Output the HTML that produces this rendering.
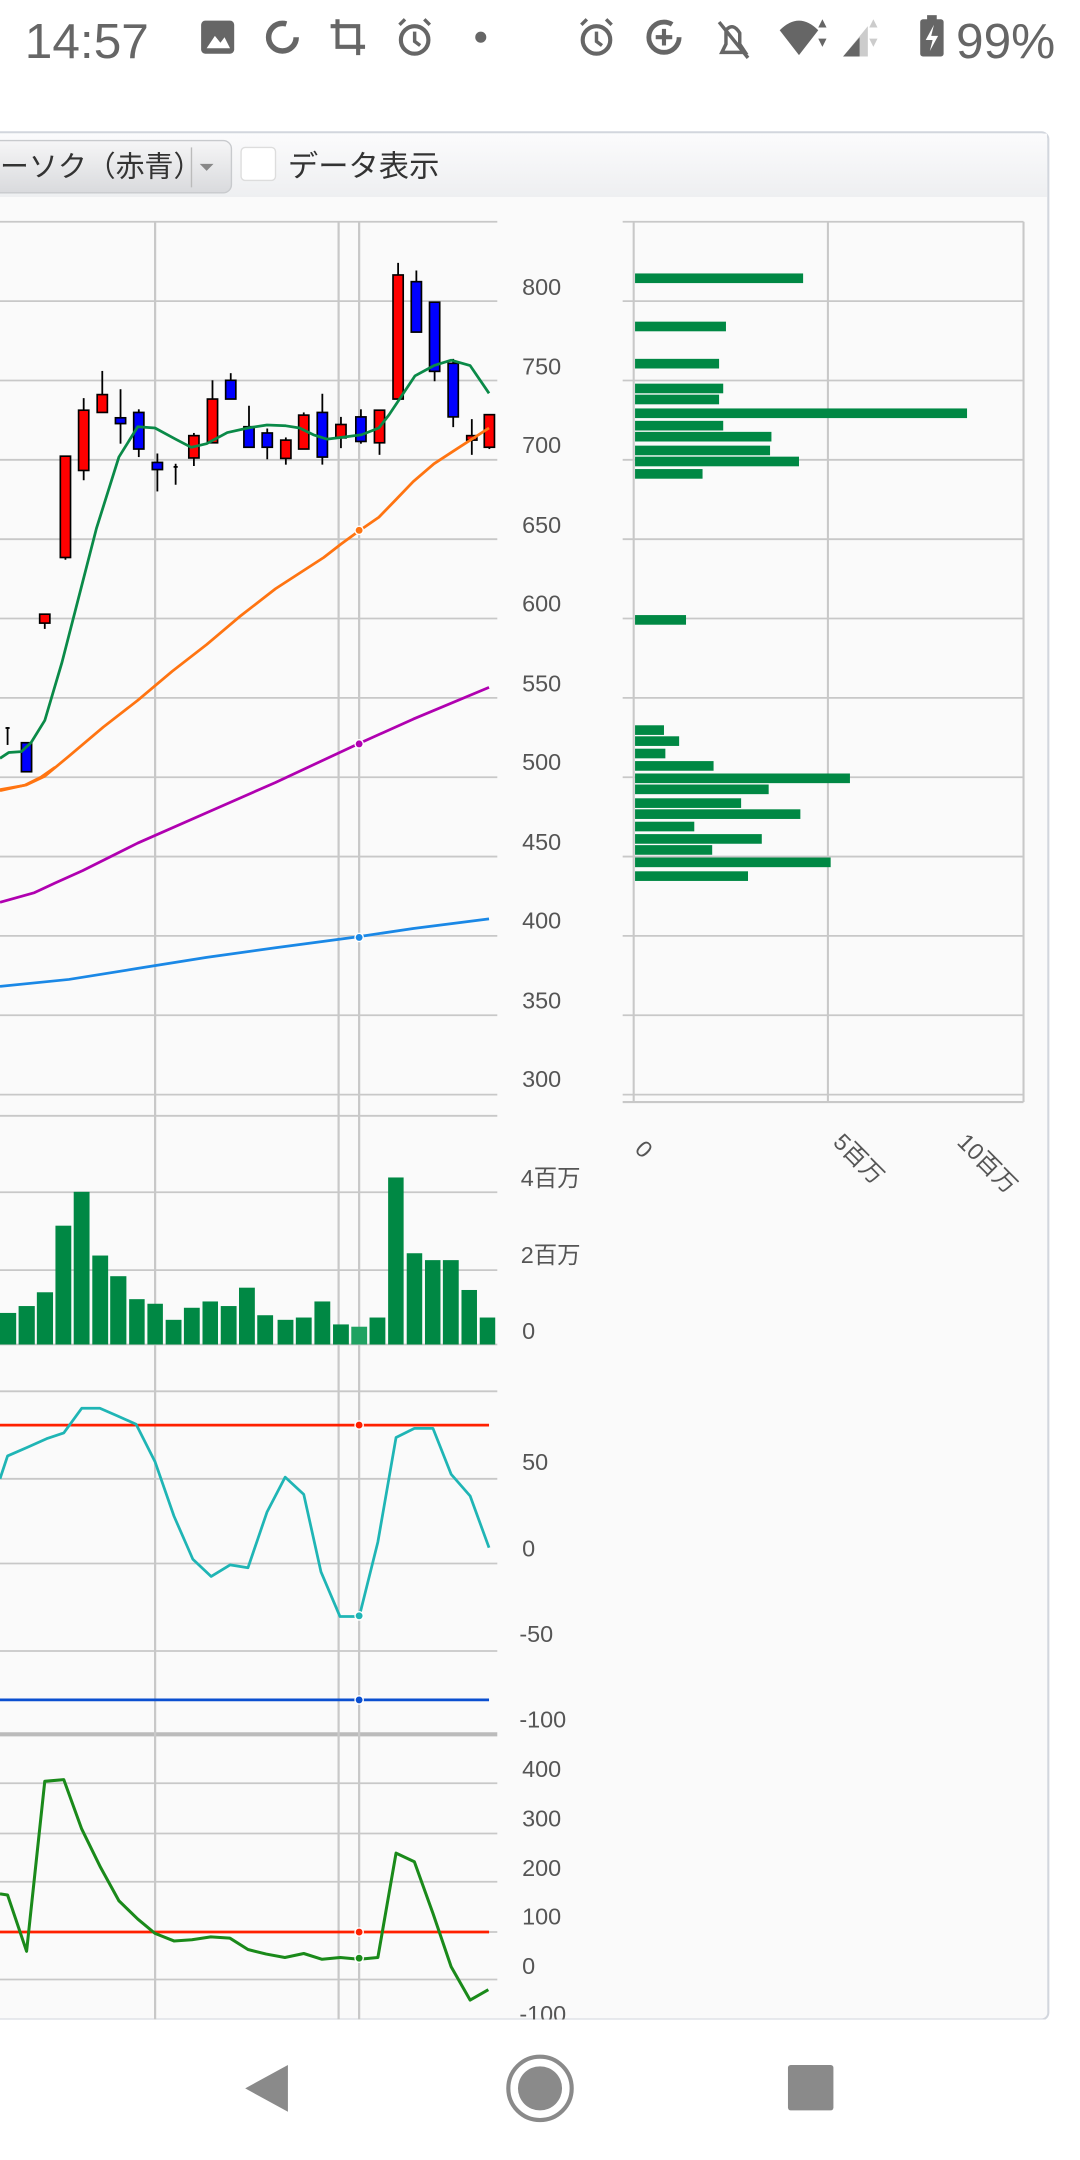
<!DOCTYPE html>
<html><head><meta charset="utf-8">
<style>
html,body{margin:0;padding:0;background:#fff;width:1080px;height:2160px;overflow:hidden}
svg{display:block}
text{font-family:"Liberation Sans","Noto Sans CJK JP",sans-serif}
</style></head>
<body>
<svg id="s" width="1080" height="2160" viewBox="0 0 784 1568" xmlns="http://www.w3.org/2000/svg">
<rect x="0" y="0" width="784" height="1568" fill="#fff"/>
<!-- status bar -->
<g fill="#666">
<text x="18" y="42" font-size="36" fill="#666">14:57</text>
<rect x="146" y="15" width="24" height="24" rx="3"/>
<path d="M150 35 L156 26 L160 31 L163 27 L167 35 Z" fill="#fff"/>
<circle cx="205" cy="27" r="10" fill="none" stroke="#666" stroke-width="4" stroke-dasharray="50 13"/>
<path d="M245 14 V34 H265 M240 19 H260 V40" fill="none" stroke="#666" stroke-width="3"/>
<circle cx="301" cy="29" r="10" fill="none" stroke="#666" stroke-width="3"/>
<path d="M301 23 V30 L305 33 M290 18 L294 14 M312 18 L308 14" fill="none" stroke="#666" stroke-width="2.5"/>
<circle cx="349" cy="27" r="4"/>
<circle cx="433" cy="29" r="10" fill="none" stroke="#666" stroke-width="3"/>
<path d="M433 23 V30 L437 33 M422 18 L426 14 M444 18 L440 14" fill="none" stroke="#666" stroke-width="2.5"/>
<circle cx="482" cy="27" r="11" fill="none" stroke="#666" stroke-width="3.5" stroke-dasharray="58 11"/>
<path d="M482 21 V33 M476 27 H488" stroke="#666" stroke-width="3"/>
<path d="M524 38 H541 L537 32 V24 Q532 16 527 22 V32 Z M522 16 L543 42" fill="none" stroke="#666" stroke-width="2.5"/>
<path d="M566 22 Q580 8 594 22 L580 40 Z"/>
<path d="M597 14 L600 20 H594 Z M597 34 L600 28 H594 Z"/>
<path d="M612 41 L630 19 V41 Z" fill="#ccc"/>
<path d="M612 41 L624 27 V41 Z"/>
<path d="M634 14 L637 20 H631 Z M634 34 L637 28 H631 Z" fill="#ccc"/>
<rect x="668" y="14" width="17" height="27" rx="2"/>
<rect x="673" y="11" width="7" height="4"/>
<path d="M678 18 L672 29 H677 L675 37 L681 26 H676 Z" fill="#fff"/>
<text x="694" y="42" font-size="36" fill="#666">99%</text>
</g>
<!-- chart panel background -->
<defs><linearGradient id="tb" x1="0" y1="0" x2="0" y2="1"><stop offset="0" stop-color="#fbfbfc"/><stop offset="1" stop-color="#eeeff1"/></linearGradient>
<linearGradient id="btn" x1="0" y1="0" x2="0" y2="1"><stop offset="0" stop-color="#f6f6f7"/><stop offset="1" stop-color="#d9dadd"/></linearGradient></defs>
<rect x="-10" y="96" width="771" height="1370" rx="5" fill="#fafafa" stroke="#d2d6dd" stroke-width="1.5"/>
<rect x="-9" y="97" width="769" height="46" fill="url(#tb)"/>
<rect x="-10" y="102" width="178" height="38" rx="6" fill="url(#btn)" stroke="#c8cacd"/>
<text x="0" y="128" font-size="21" fill="#333">ーソク（赤青）</text>
<line x1="139" y1="107" x2="139" y2="136" stroke="#bbb"/>
<path d="M145 119 H155 L150 124 Z" fill="#888"/>
<rect x="175" y="107" width="25" height="24" rx="3" fill="#fff" stroke="#ddd"/>
<text x="209" y="128" font-size="22" fill="#333">データ表示</text>
<g id="g"></g>
<!-- nav bar -->
<rect x="0" y="1466" width="784" height="102" fill="#fff"/>
<path d="M209 1499 V1533 L178 1516 Z" fill="#8a8a8a"/>
<circle cx="392" cy="1516" r="23" fill="none" stroke="#8a8a8a" stroke-width="3"/>
<circle cx="392" cy="1516" r="16" fill="#8a8a8a"/>
<rect x="572" y="1499" width="33" height="33" rx="2" fill="#8a8a8a"/>
</svg>
<script>
var g=document.getElementById('g');var h='';
function L(x1,y1,x2,y2,c,w){h+='<line x1="'+x1+'" y1="'+y1+'" x2="'+x2+'" y2="'+y2+'" stroke="'+c+'" stroke-width="'+(w||1.3)+'"/>';}
function T(x,y,t,s,extra){h+='<text x="'+x+'" y="'+y+'" font-size="'+(s||17)+'" fill="#555" '+(extra||'')+'>'+t+'</text>';}
var grid='#c8c8c8';
// main grid
for(var i=0;i<12;i++){var y=161+i*57.6;L(0,y,361,y,grid);}
[810,865.5,922,976].forEach(function(y){L(0,y,361,y,grid);});
[1010,1073.5,1135,1198.5].forEach(function(y){L(0,y,361,y,grid);});
[1294.5,1331,1366,1402.5,1437].forEach(function(y){L(0,y,361,y,grid);});
L(0,1259,361,1259,'#bbb',3);
[112.6,245.8,260.7].forEach(function(x){L(x,161,x,1466,grid,1.6);});
// axis labels
var labs=[[800,208],[750,266],[700,323],[650,381],[600,438],[550,496],[500,553],[450,611],[400,668],[350,726],[300,783]];
labs.forEach(function(a){T(379,a[1]+6,a[0]);});
T(378,861,'4百万');T(378,917,'2百万');T(379,972,'0');
T(379,1067,'50');T(379,1130,'0');T(377,1192,'-50');T(377,1254,'-100');
T(379,1290,'400');T(379,1326,'300');T(379,1362,'200');T(379,1397,'100');T(379,1433,'0');T(377,1468,'-100');
// candles: zoom coords
var zx=function(x){return x*0.25;}, zy=function(y){return 72.6+y*0.324;};
var C=[[77,1440,1505,1440,1505,'b'],[130,1152,1172,1152,1185,'r'],[190,798,1025,798,1030,'r'],[243,695,830,668,852,'r'],[297,660,700,607,700,'r'],[350,712,725,648,770,'b'],[403,700,782,693,800,'b'],[457,812,828,792,877,'b'],[563,752,802,746,820,'r'],[617,670,768,628,768,'r'],[670,628,670,612,670,'b'],[723,732,778,685,778,'b'],[776,746,778,736,805,'b'],[830,762,803,756,817,'r'],[882,706,782,700,782,'r'],[936,700,800,658,817,'b'],[990,727,757,710,780,'r'],[1048,710,765,693,770,'b'],[1102,695,768,695,795,'r'],[1156,392,670,365,670,'r'],[1209,407,520,382,520,'b'],[1262,453,608,453,630,'b'],[1316,590,710,580,733,'b'],[1370,752,762,715,795,'r'],[1421,705,778,705,782,'r']];
C.forEach(function(c){var x=zx(c[0]);L(x,zy(c[3]),x,zy(c[4]),'#000',1.3);
h+='<rect x="'+(x-3.7)+'" y="'+zy(c[1])+'" width="7.4" height="'+Math.max(2,zy(c[2])-zy(c[1]))+'" fill="'+(c[5]=='r'?'#f00':'#00f')+'" stroke="#000" stroke-width="1.2"/>';});
L(zx(510),zy(815),zx(510),zy(862),'#000',1.3);L(zx(504),zy(822),zx(516),zy(822),'#000',1.3);
L(zx(22),zy(1405),zx(22),zy(1445),'#000',1.3);L(zx(16),zy(1407),zx(28),zy(1407),'#000',1.3);
function P(pts,fx,fy,c,w){h+='<polyline fill="none" stroke="'+c+'" stroke-width="'+(w||2)+'" stroke-linejoin="round" points="'+pts.map(function(p){return fx(p[0]).toFixed(1)+','+fy(p[1]).toFixed(1);}).join(' ')+'"/>';}
var id=function(v){return v;};
P([[0,1475],[25,1462],[62,1460],[90,1440],[130,1390],[180,1260],[230,1110],[280,960],[345,800],[400,732],[450,735],[510,760],[555,778],[600,770],[660,745],[720,735],[775,728],[830,730],[870,735],[910,750],[950,760],[1000,755],[1050,750],[1100,735],[1130,705],[1160,670],[1205,618],[1260,595],[1310,583],[1365,595],[1420,657]],zx,zy,'#0a8a48');
P([[0,574],[18,570],[30,564],[40,557]],id,id,'#ff7411');
P([[0,1545],[75,1535],[130,1515],[200,1470],[300,1405],[400,1345],[500,1280],[600,1220],[700,1155],[800,1095],[880,1055],[940,1025],[990,995],[1043,965],[1100,935],[1150,895],[1200,855],[1260,815],[1320,785],[1420,735]],zx,zy,'#ff7411');
P([[0,655],[25,648],[40,641],[60,632],[100,612],[150,590],[200,568],[260,540],[300,522],[355,499]],id,id,'#b000b0');
P([[0,716],[50,711],[100,703],[150,695],[200,688],[260,680],[300,674],[355,667]],id,id,'#1a88e6');
[[385,'#ff7411'],[540,'#b000b0'],[680.5,'#1a88e6']].forEach(function(a){h+='<circle cx="260.7" cy="'+a[0]+'" r="3" fill="'+a[1]+'" stroke="#fff" stroke-width="1"/>';});
// volume
var vx=function(x){return x*0.25;}, vy=function(y){return 798.5+y*0.4167;};
var V=[[0,47,371],[54,101,359],[107,154,335],[161,207,219],[214,260,160],[268,314,271],[320,367,307],[375,420,347],[428,473,355],[481,527,383],[534,580,362],[588,633,351],[641,687,359],[694,740,327],[747,793,375],[806,852,383],[859,905,379],[913,959,351],[967,1013,391],[1020,1066,395],[1073,1119,379],[1127,1172,135],[1181,1226,267],[1234,1279,279],[1286,1332,279],[1340,1385,331],[1393,1438,379]];
V.forEach(function(v,i){h+='<rect x="'+vx(v[0])+'" y="'+vy(v[2])+'" width="'+(vx(v[1])-vx(v[0]))+'" height="'+(976-vy(v[2]))+'" fill="'+(i==19?'#1fa262':'#008844')+'"/>';});
// oscillator
L(0,1034.5,355,1034.5,'#ff2000',2);L(0,1234,355,1234,'#0a4fd0',2);
P([[0,660],[22,620],[80,605],[135,590],[185,580],[237,537],[290,537],[340,550],[395,565],[450,630],[505,725],[560,800],[613,830],[668,810],[720,815],[775,718],[828,657],[882,687],[932,822],[987,900],[1043,900],[1097,770],[1150,588],[1203,572],[1257,572],[1310,652],[1365,690],[1420,780]],vx,vy,'#1fb5b5',2);
L(0,1402.5,355,1402.5,'#ff2000',2);
P([[0,1383],[22,1385],[77,1483],[130,1187],[185,1184],[237,1270],[292,1337],[345,1395],[400,1427],[450,1452],[505,1465],[557,1463],[612,1458],[667,1460],[720,1480],[773,1488],[827,1494],[882,1487],[935,1497],[988,1494],[1043,1497],[1097,1494],[1150,1312],[1203,1327],[1257,1417],[1310,1510],[1365,1568],[1418,1550]],vx,vy,'#1a8a1a',2.2);
[[1034.5,'#ff2000'],[1173,'#1fb5b5'],[1234,'#0a4fd0'],[1402.5,'#ff2000'],[1421.5,'#1a8a1a']].forEach(function(a){h+='<circle cx="260.7" cy="'+a[0]+'" r="3" fill="'+a[1]+'" stroke="#fff" stroke-width="1"/>';});
// volume profile
for(var i=0;i<12;i++){var y=161+i*57.6;L(452,y,743,y,grid);}
L(460,161,460,800,grid,1.5);L(601,161,601,800,grid,1.5);L(743,161,743,800,grid,1.5);L(452,800,743,800,grid,1.5);
var B=[[202,583],[237,527],[264,522],[282,525],[290,522],[300,702],[309,525],[317,560],[327,559],[335,580],[344,510],[450,498],[530,482],[538,493],[547,483],[556,518],[565,617],[573,558],[583,538],[591,581],[600,504],[609,553],[617,517],[626,603],[636,543]];
B.forEach(function(b){h+='<rect x="461" y="'+(b[0]-3.5)+'" width="'+(b[1]-461)+'" height="7" fill="#008844"/>';});
T(460,835,'0',17,'transform="rotate(45 460 835)"');
T(604,830,'5百万',17,'transform="rotate(45 604 830)"');
T(694,830,'10百万',17,'transform="rotate(45 694 830)"');
g.innerHTML=h;
</script>
</body></html>
